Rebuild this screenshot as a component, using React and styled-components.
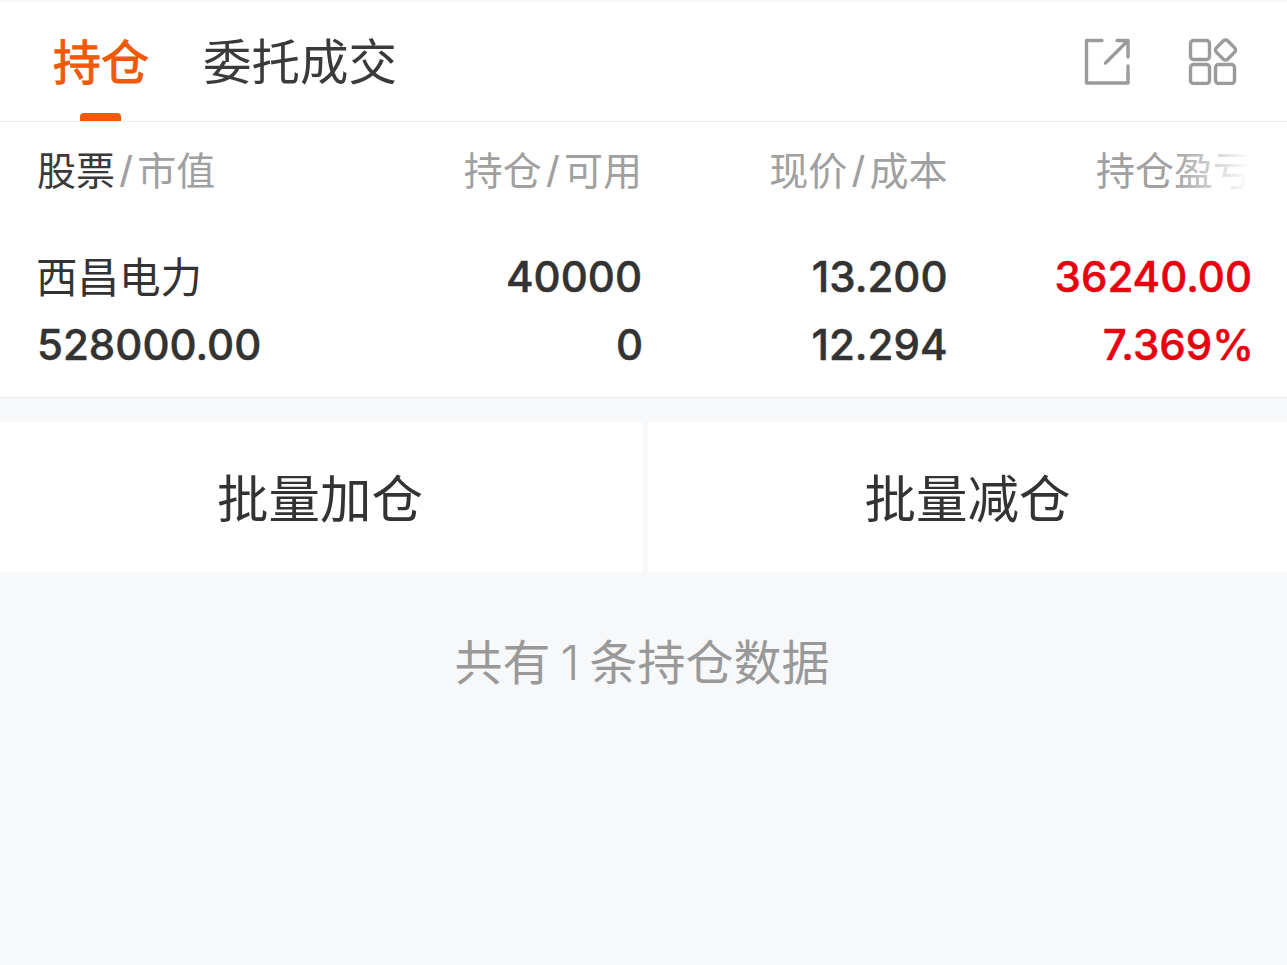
import React from 'react';
import styled, { createGlobalStyle } from 'styled-components';

const Global = createGlobalStyle`
  html, body { margin: 0; padding: 0; background: #f7f8fa; }
  body { font-family: "Noto Sans CJK SC", sans-serif; }
`;
const CJK = '"Noto Sans CJK SC", sans-serif';
const NUM = 'Inter, "Noto Sans CJK SC", sans-serif';

const Page = styled.div`
  width: 1287px; height: 965px; overflow: hidden;
  background: #f7f8fa; padding-top: 2px; box-sizing: border-box;
`;
const TabBar = styled.div`
  height: 120px; box-sizing: border-box; background: #fff; border-bottom: 1px solid #ececec;
  display: flex; align-items: stretch; padding: 0 49px 0 53px;
`;
const Tab = styled.div`
  position: relative; font-family: ${CJK};
  font-size: ${p => (p.$active ? 48 : 48.5)}px; line-height: 120px; height: 119px; margin-top: -3px;
  color: ${p => (p.$active ? '#ee5a08' : '#3a3a3a')};
  margin-right: 54px;
  ${p => p.$active && `
    -webkit-text-stroke: 1px #ee5a08;
    &::after { content: ''; position: absolute; left: 27px; bottom: -3px; width: 41px; height: 8px;
      background: #ee5a08; border-radius: 4px 4px 0 0; }
  `}
`;
const Icons = styled.div`
  margin-left: auto; display: flex; align-items: center; gap: 57px; color: #9b9b9b;
`;
const HeadRow = styled.div`
  background: #fff; height: 98px; display: grid; position: relative; box-sizing: border-box;
  grid-template-columns: 37px 220px 385px 305.5px 304.5px; align-items: center;
  overflow: hidden;
`;
const Cell = styled.div`
  grid-column: ${p => p.$c}; text-align: ${p => p.$left ? 'left' : 'right'};
  font-family: ${CJK}; font-size: 39px; color: #a0a0a0; white-space: nowrap; line-height: 98px;
  margin-top: -6px;
`;
const Dark = styled.span` color: #3a3a3a; `;
const Slash = styled.span`
  font-size: 44px; margin: 0 5px; color: #a0a0a0; font-family: "Liberation Sans", sans-serif;
  font-weight: 400; vertical-align: -2px; line-height: 1;
`;
const Fade = styled.div`
  position: absolute; top: 0; right: 0; width: 115px; height: 100%;
  background: linear-gradient(to right, rgba(255,255,255,0), #fff 68%);
`;
const DataRow = styled.div`
  background: #fff; height: 178px; border-bottom: 1px solid #eceded; display: grid;
  grid-template-columns: 37px 220px 385px 305.5px 304.5px;
  grid-template-rows: 68px 68px; align-content: start; padding-top: 23px; box-sizing: border-box;
`;
const Val = styled.div`
  grid-column: ${p => p.$c}; text-align: ${p => p.$left ? 'left' : 'right'};
  font-family: ${NUM}; font-weight: 500; font-size: 42px; line-height: 68px; white-space: nowrap;
  -webkit-text-stroke: 0.5px ${p => p.$red ? '#e8000f' : '#333'};
  color: ${p => p.$red ? '#e8000f' : '#333'};
  margin-right: ${p => p.$nudge || 0}px;
`;
const Name = styled.div`
  grid-column: 2; font-family: ${CJK}; font-size: 41.5px; line-height: 68px; color: #333; white-space: nowrap;
  margin-top: -2px; margin-left: -1px;
`;
const Actions = styled.div`
  margin-top: 24px; display: flex; justify-content: space-between; height: 150px;
`;
const Action = styled.div`
  background: #fff; width: ${p => p.$w}px; display: flex; align-items: center; justify-content: center;
  font-family: ${CJK}; font-size: 51.5px; color: #333; padding-bottom: 3px; box-sizing: border-box;
  padding-right: ${p => p.$inset || 0}px;
`;
const Note = styled.div`
  text-align: center; font-family: ${CJK}; font-size: 48px; color: #999; line-height: 60px; margin-top: 57px;
  padding-right: 3px;
`;
const NoteDigit = styled.span` margin: 0 10px; font-family: ${NUM}; font-weight: 300; `;

const ExternalIcon = () => (
  <svg width="47" height="48" viewBox="0 0 47 48" fill="none" stroke="currentColor" strokeWidth="3.4" strokeLinejoin="round" strokeLinecap="round">
    <path d="M18 2.5H2.5V45H44V28" />
    <path d="M21.5 25 43.5 3M33 2.5h11V19" />
  </svg>
);
const AppsIcon = () => (
  <svg width="50" height="47" viewBox="0 0 50 47" fill="none" stroke="currentColor" strokeWidth="3.4">
    <rect x="2.5" y="2.5" width="19" height="19" rx="3" />
    <rect x="2.5" y="26.5" width="19" height="19" rx="3" />
    <rect x="27.5" y="26.5" width="19" height="19" rx="3" />
    <rect x="29.5" y="4" width="16" height="16" rx="3" transform="rotate(45 37.5 12)" />
  </svg>
);

export default function App() {
  return (
    <Page>
      <Global />
      <TabBar>
        <Tab $active>持仓</Tab>
        <Tab>委托成交</Tab>
        <Icons><ExternalIcon /><AppsIcon /></Icons>
      </TabBar>
      <HeadRow>
        <Cell $c={2} $left><Dark>股票</Dark><Slash>/</Slash>市值</Cell>
        <Cell $c={3}>持仓<Slash>/</Slash>可用</Cell>
        <Cell $c={4}>现价<Slash>/</Slash>成本</Cell>
        <Cell $c={5}>持仓盈亏</Cell>
        <Fade />
      </HeadRow>
      <DataRow>
        <Name>西昌电力</Name>
        <Val $c={3}>40000</Val>
        <Val $c={4}>13.200</Val>
        <Val $c={5} $red>36240.00</Val>
        <Val $c={2} $left>528000.00</Val>
        <Val $c={3} $nudge={-1}>0</Val>
        <Val $c={4}>12.294</Val>
        <Val $c={5} $red $nudge={-2}>7.369%</Val>
      </DataRow>
      <Actions>
        <Action $w={642} $inset={2}>批量加仓</Action>
        <Action $w={639}>批量减仓</Action>
      </Actions>
      <Note>共有<NoteDigit>1</NoteDigit>条持仓数据</Note>
    </Page>
  );
}
